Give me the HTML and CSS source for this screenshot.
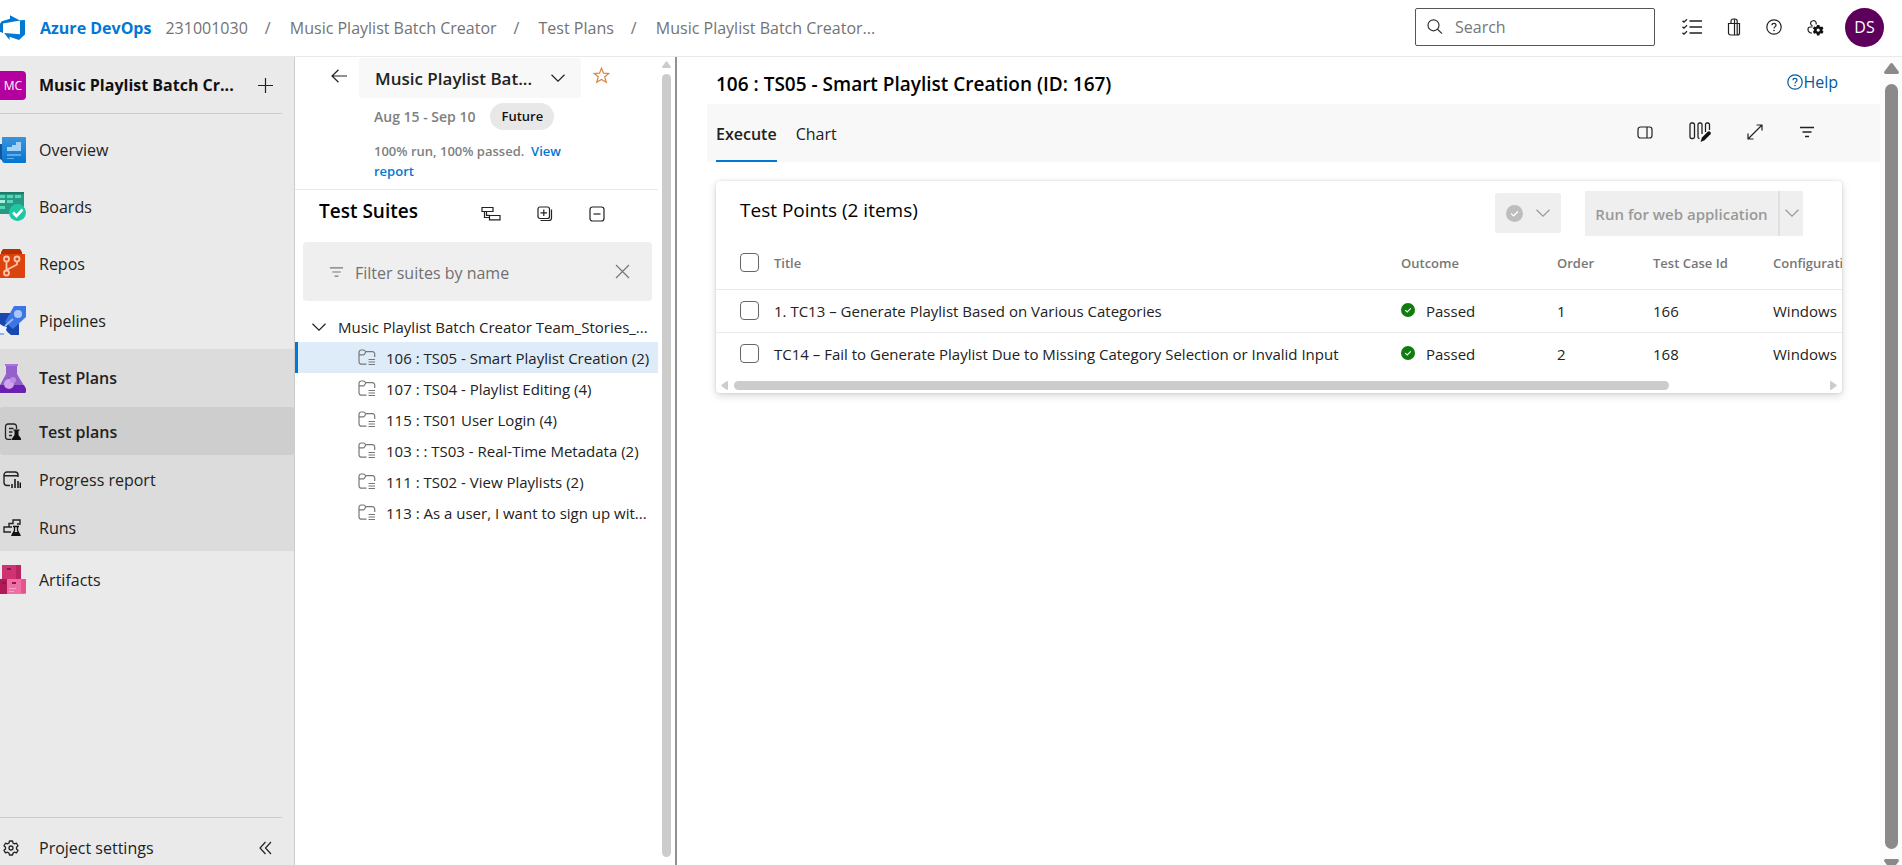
FILE: index.html
```html
<!DOCTYPE html>
<html lang="en">
<head>
<meta charset="utf-8">
<title>Test Plans - Azure DevOps</title>
<link rel="stylesheet" href="styles.css">
</head>
<body>
<svg class="defs" aria-hidden="true">
  <symbol id="chevron" viewBox="0 0 14 8"><path d="M.5.8 7 7.2 13.5.8" fill="none" stroke="currentColor" stroke-width="1.2"/></symbol>
  <symbol id="filter" viewBox="0 0 16 12"><path d="M1 1.500h14M3.500 6h9M6 10.500h4" fill="none" stroke="currentColor" stroke-width="1.300"/></symbol>
  <symbol id="help" viewBox="0 0 16 16"><circle cx="8" cy="8" r="7.200" fill="none" stroke="currentColor" stroke-width="1.200"/><path d="M6 6.300C6 5 6.900 4.300 8 4.300s2 .8 2 1.900C10 7.600 8 7.700 8 9.500" fill="none" stroke="currentColor" stroke-width="1.200"/><circle cx="8" cy="11.500" r=".8" fill="currentColor"/></symbol>
  <symbol id="suite" viewBox="0 0 18 17"><path d="M8.500 15.200H3.500a2.500 2.500 0 0 1-2.500-2.500V3.200A2.200 2.200 0 0 1 3.200 1h2.300c1.200 0 1.600 1.700 3 1.700h6A2.200 2.200 0 0 1 16.700 5v3M1 5.800h4.500c1.400 0 1.600-3.100 3-3.100M10.500 10.500H17M10.500 13H17M10.500 15.500H17" fill="none" stroke="currentColor" stroke-width="1.200"/></symbol>
  <symbol id="passed" viewBox="0 0 14 14"><circle cx="7" cy="7" r="7" fill="currentColor"/><path d="M4.200 7.100 6.200 9 9.800 5.300" fill="none" stroke="#fff" stroke-width="1.100"/></symbol>
</svg>

<header class="topbar">
  <svg class="logo" viewBox="0 0 25 25"><path fill="#0078d4" d="M25 5v14.500L19 25l-9.500-3.300V25l-5.300-7L20 19.300V5.300zM20 5.500 10 .2v3.600L1.800 6.300 0 8.700v8l3 1.400V8.400z"/></svg>
  <a class="brand" href="#">Azure DevOps</a>
  <nav class="crumbs" aria-label="Breadcrumb">
    <a href="#">231001030</a><span>/</span><a href="#">Music Playlist Batch Creator</a><span>/</span><a href="#">Test Plans</a><span>/</span><a href="#">Music Playlist Batch Creator...</a>
  </nav>
  <label class="search">
    <svg width="16" height="16" viewBox="0 0 16 16"><path d="M10.800 10.500 15 14.700M12 6.300a5.500 5.500 0 1 1-11 0 5.500 5.500 0 0 1 11 0z" fill="none" stroke="#333" stroke-width="1.200"/></svg>
    <input type="search" placeholder="Search" aria-label="Search">
  </label>
  <div class="top-actions">
    <button aria-label="Work items"><svg width="20" height="18" viewBox="0 0 20 18"><path d="M7.500 3H20M7.500 9H20M7.500 15H20M.5 2.700 2 4.200 5 1.200M.5 8.700 2 10.200 5 7.200M.5 14.700 2 16.200 5 13.200" fill="none" stroke="#222" stroke-width="1.300"/></svg></button>
    <button aria-label="Marketplace"><svg width="14" height="18" viewBox="0 0 14 18"><path d="M1.500 5.500h11v9.500a2 2 0 0 1-2 2h-7a2 2 0 0 1-2-2zM4 5.500V3.200C4 1.900 4.800 1 6 1h2.200c1.200 0 2 .9 2 2.200V17M7.500 1v16" fill="none" stroke="#222" stroke-width="1.200"/></svg></button>
    <button aria-label="Help"><svg width="16" height="16"><use href="#help"/></svg></button>
    <button aria-label="User settings"><svg width="17" height="17" viewBox="0 0 17 17"><path d="M9 5.500A3 3 0 0 0 9 3.200 3 3 0 0 0 3.500 4c0 1.400.8 2.400 2 2.900M5.500 8H3.200A2.200 2.200 0 0 0 1 10.200c0 2 1.400 3.600 3.800 4" fill="none" stroke="#222" stroke-width="1.200"/><path fill="#111" fill-rule="evenodd" d="M10 6h2.400l.4 1.500 1 .5 1.500-.5 1.200 2-1.100 1.100v1l1.100 1.100-1.200 2-1.500-.4-1 .5-.4 1.600H10l-.4-1.600-1-.5-1.500.4-1.200-2L7 11.600v-1L5.900 9.500l1.200-2 1.500.5 1-.5zM11.200 9.500a1.600 1.600 0 1 0 0 3.200 1.600 1.600 0 0 0 0-3.200z"/></svg></button>
    <button class="avatar" aria-label="Account">DS</button>
  </div>
</header>

<div class="shell">
  <aside class="sidebar">
    <div class="project">
      <span class="project-badge">MC</span>
      <strong>Music Playlist Batch Cr...</strong>
      <button aria-label="Add"><svg width="15" height="15" viewBox="0 0 15 15"><path d="M7.500 0v15M0 7.500h15" stroke="#222" stroke-width="1.200"/></svg></button>
    </div>
    <nav class="menu">
      <a href="#"><svg class="hub" viewBox="0 0 26 29"><path fill="#135796" d="M0 9h8v17H3L0 24z"/><path fill="url(#gb)" d="M2 2h23a1 1 0 0 1 1 1v24a1 1 0 0 1-1 1H5a3 3 0 0 1-3-3z"/><defs><linearGradient id="gb" x2="0" y2="1"><stop stop-color="#3b93dc"/><stop offset="1" stop-color="#0574d2"/></linearGradient></defs><path fill="#a8d2f5" d="M7 12h5v-2h4V7h5v9H7z"/><path fill="#5fabea" d="M7 19h14v2H7zM7 23h7v1H7z"/></svg>Overview</a>
      <a href="#"><svg class="hub" viewBox="0 0 26 29"><path fill="#289a83" d="M0 0h24v22H0z"/><path fill="#1b7c69" d="M0 0h24v2H0z"/><path fill="#57d6b9" d="M0 3h5v3H0zM7 3h6v3H7zM15 3h6v3h-6zM7 8h6v3H7zM0 14h5v3H0z"/><path fill="#a8f2de" d="M0 8h5v3H0z"/><circle cx="17.500" cy="20.500" r="8.500" fill="#1fc6a6"/><path d="m13 20.500 3.500 3.500 6-6.500" stroke="#fff" stroke-width="2.600" fill="none"/></svg>Boards</a>
      <a href="#"><svg class="hub" viewBox="0 0 26 29"><path fill="#b92f00" d="M3 0h17l2 3v4H1V3z"/><path fill="#db430f" d="M0 5h25v23a1 1 0 0 1-1 1H0z"/><g fill="none" stroke="#ffc5ab" stroke-width="1.800"><circle cx="6.500" cy="10" r="2.500"/><circle cx="17" cy="10" r="2.500"/><circle cx="6.500" cy="24" r="2.500"/><path d="M6.500 12.500v9M17 12.500v3L6.500 21"/></g></svg>Repos</a>
      <a href="#"><svg class="hub" viewBox="0 0 26 29"><path fill="#1748ad" d="M0 7h12l7 5v17h-8L0 20z"/><path fill="#3d76e4" d="M14 0h12v11L13 23l-8-7z"/><circle cx="18" cy="8" r="4" fill="#a9c5fa"/><path d="m5 20 8-7" stroke="#9ab9f5" stroke-width="1.800"/><path fill="#eef4ff" d="m0 18 3 2 4 1-1 3 2 3-4-1-1 3-3-2z"/><path fill="#91b0ea" d="M0 27h4v2H0z"/></svg>Pipelines</a>
      <a href="#" class="current"><svg class="hub" viewBox="0 0 26 29"><path fill="#9461cb" d="M6 2h11v8l9 15c1 2 0 4-2 4H0v-8l6-11z"/><path fill="#a774da" d="M5 0h13v2H5z"/><path fill="#6a20b0" d="M0 21h24l2 4c1 2 0 4-2 4H0z"/><circle cx="9" cy="20" r="5" fill="#cfa4ed"/><circle cx="13" cy="16" r="3" fill="#bd8be3"/></svg>Test Plans</a>
      <div class="submenu">
        <a href="#" class="active"><svg width="18" height="18" viewBox="0 0 18 18"><path d="M8.500 16.400H5A2.500 2.500 0 0 1 2.500 14V3.500A2.500 2.500 0 0 1 5 1h6a2.500 2.500 0 0 1 2.500 2.500V6M6 5.500h4.500M6 9h3.500M6 12.500h3" fill="none" stroke="#222" stroke-width="1.300"/><path fill="#111" d="M10.500 6.500h6v1.300h-1V12l2.500 3.500V17H9v-1.500l2.500-3.500V7.800h-1z"/></svg>Test plans</a>
        <a href="#"><svg width="18" height="18" viewBox="0 0 18 18"><path d="M7 14.500H4A3 3 0 0 1 1 11.500V4a3 3 0 0 1 3-3h8a3 3 0 0 1 3 3v2M1 4.800h14" fill="none" stroke="#222" stroke-width="1.400"/><path d="M9 13v4M12 8v9M15 10v7M17.300 11.500V17" stroke="#111" stroke-width="1.500"/></svg>Progress report</a>
        <a href="#"><svg width="18" height="18" viewBox="0 0 18 18"><path d="M8 13H1V8h5V4.500h4V1h7v4h-3M6 8h3" fill="none" stroke="#222" stroke-width="1.400"/><path d="M10 7.500h6M11.500 8v3.500L9 16.200h8l-2.500-4.700V8" fill="none" stroke="#111" stroke-width="1.300"/><path fill="#111" d="M10.500 13h5l2 4h-9z"/></svg>Runs</a>
      </div>
      <a href="#"><svg class="hub" viewBox="0 0 26 29"><path fill="#cf3472" d="M2 0h19v15H2z"/><path fill="#b62560" d="M16 0h5v15h-5z"/><path fill="#b01a58" d="M0 14h8v15H0z"/><path fill="#ee6fa4" d="M7 14h19v14a1 1 0 0 1-1 1H7z"/><path fill="#e4558f" d="M21 14h5v14h-5z"/><path fill="#98134a" d="M7 3h4v2H7zM2 17h4v2H2zM12 17h4v2h-4z"/><path fill="#f8a6c6" d="M9 23h7v1H9zM9 26h5v1H9z"/></svg>Artifacts</a>
    </nav>
    <div class="settings">
      <a href="#"><svg width="16" height="16" viewBox="0 0 16 16"><path d="M6.500 1h3l.5 2 1.500.9 2-.7 1.500 2.600L13.500 7.200v1.700L15 10.300l-1.500 2.500-2-.6-1.500.9-.5 1.900h-3L6 13.100l-1.500-.9-2 .6L1 10.300l1.500-1.400V7.200L1 5.800l1.500-2.600 2 .7L6 3z" fill="none" stroke="#222" stroke-width="1.300" stroke-linejoin="round"/><circle cx="8" cy="8" r="2" fill="none" stroke="#222" stroke-width="1.300"/></svg>Project settings</a>
      <button aria-label="Collapse navigation"><svg width="13" height="14" viewBox="0 0 13 14"><path d="M6.500 1 1 7l5.500 6M12 1 6.500 7l5.500 6" fill="none" stroke="#222" stroke-width="1.200"/></svg></button>
    </div>
  </aside>

  <section class="plan">
    <div class="plan-content">
      <div class="plan-head">
        <button class="back" aria-label="Back"><svg width="16" height="14" viewBox="0 0 16 14"><path d="M16 7H1M7.500.8 1 7l6.500 6.200" fill="none" stroke="#222" stroke-width="1.200"/></svg></button>
        <div class="plan-info">
          <div class="plan-title">
            <button class="picker">Music Playlist Bat...<svg width="14" height="8"><use href="#chevron"/></svg></button>
            <button class="star" aria-label="Favorite"><svg width="17" height="17" viewBox="0 0 17 17"><path d="m8.500 1.200 2 5 5.300.3-4.100 3.300 1.600 5.500-4.800-2.900-4.800 2.900 1.600-5.500-4.100-3.300 5.300-.3z" fill="none" stroke="#d9843b" stroke-width="1.200"/></svg></button>
          </div>
          <div class="dates">Aug 15 - Sep 10<span class="pill">Future</span></div>
          <p class="summary">100% run, 100% passed.&nbsp; <a href="#">View report</a></p>
        </div>
      </div>
      <div class="suites-head">
        <h2>Test Suites</h2>
        <button aria-label="Suite layout"><svg width="20" height="16" viewBox="0 0 20 16"><path d="M1 1.500h11v4H1zM8.500 9.500H19v4.300H8.500zM3.500 5.500v6h5M5.500 5.500v3.800h3" fill="none" stroke="#222" stroke-width="1.200"/></svg></button>
        <button aria-label="Expand all"><svg width="16" height="16" viewBox="0 0 16 16"><rect x="1" y="1" width="11.500" height="11.500" rx="2" fill="none" stroke="#222" stroke-width="1.200"/><path d="M6.800 3.500v6.500M3.500 6.800H10M14.500 3.500V12a2.500 2.500 0 0 1-2.500 2.500H3.500" fill="none" stroke="#222" stroke-width="1.200"/></svg></button>
        <button aria-label="Collapse all"><svg width="16" height="16" viewBox="0 0 16 16"><rect x="1" y="1" width="14" height="14" rx="2.500" fill="none" stroke="#222" stroke-width="1.200"/><path d="M4.500 8h7" stroke="#222" stroke-width="1.200"/></svg></button>
      </div>
      <div class="filter">
        <svg width="15" height="12"><use href="#filter"/></svg>
        <input type="text" placeholder="Filter suites by name" aria-label="Filter suites by name">
        <button aria-label="Clear filter"><svg width="15" height="15" viewBox="0 0 15 15"><path d="m1 1 13 13M14 1 1 14" stroke="currentColor" stroke-width="1.200"/></svg></button>
      </div>
      <div class="tree">
        <button class="root"><svg width="14" height="8"><use href="#chevron"/></svg><span>Music Playlist Batch Creator Team_Stories_...</span></button>
        <ul>
          <li class="selected"><a href="#"><svg width="18" height="17"><use href="#suite"/></svg>106 : TS05 - Smart Playlist Creation (2)</a></li>
          <li><a href="#"><svg width="18" height="17"><use href="#suite"/></svg>107 : TS04 - Playlist Editing (4)</a></li>
          <li><a href="#"><svg width="18" height="17"><use href="#suite"/></svg>115 : TS01 User Login (4)</a></li>
          <li><a href="#"><svg width="18" height="17"><use href="#suite"/></svg>103 : : TS03 - Real-Time Metadata (2)</a></li>
          <li><a href="#"><svg width="18" height="17"><use href="#suite"/></svg>111 : TS02 - View Playlists (2)</a></li>
          <li><a href="#"><svg width="18" height="17"><use href="#suite"/></svg>113 : As a user, I want to sign up wit...</a></li>
        </ul>
      </div>
    </div>
    <div class="scroll-y" aria-hidden="true"><svg width="9" height="7" viewBox="0 0 9 7"><path d="M3.500 1q1-1.500 2 0L9 6q0 1-1 1H1Q0 7 0 6z" fill="currentColor"/></svg><i></i></div>
  </section>

  <main class="work">
    <div class="work-content">
      <div class="work-head">
        <h1>106 : TS05 - Smart Playlist Creation (ID: 167)</h1>
        <a class="help" href="#"><svg width="16" height="16"><use href="#help"/></svg>Help</a>
      </div>
      <div class="tabs">
        <button class="on">Execute</button>
        <button>Chart</button>
        <div class="tools">
          <button aria-label="Details pane"><svg width="16" height="13" viewBox="0 0 16 13"><rect x="1" y="1" width="14" height="11" rx="2.500" fill="none" stroke="#222" stroke-width="1.200"/><path d="M10 1v11" stroke="#222" stroke-width="1.200"/></svg></button>
          <button aria-label="Column options"><svg width="22" height="20" viewBox="0 0 22 20"><g fill="none" stroke="#222" stroke-width="1.300"><rect x="1" y="1" width="4.500" height="15.500" rx="1.500"/><path d="M13 12V2.500A1.500 1.500 0 0 0 11.500 1h-1A1.500 1.500 0 0 0 9 2.500V15a1.500 1.500 0 0 0 1.500 1.500M20.500 8V2.500A1.500 1.500 0 0 0 19 1h-1a1.500 1.500 0 0 0-1.500 1.500V10"/></g><path fill="#111" d="M11.500 20 13 15.500l6-6q1-.8 2.200.2 1.200 1.300.3 2.500l-6 6z"/></svg></button>
          <button aria-label="Full screen"><svg width="16" height="16" viewBox="0 0 16 16"><path d="M1 15 15 1M9.500 1H15v5.500M1 9.500V15h5.500" fill="none" stroke="#222" stroke-width="1.200"/></svg></button>
          <button aria-label="Filter"><svg width="16" height="12"><use href="#filter"/></svg></button>
        </div>
      </div>
      <section class="card">
        <div class="card-head">
          <h2>Test Points (2 items)</h2>
          <button class="outcome-btn" aria-label="Set outcome" disabled><svg width="17" height="17"><use href="#passed"/></svg><svg width="14" height="8"><use href="#chevron"/></svg></button>
          <div class="split"><button disabled>Run for web application</button><button aria-label="More run options" disabled><svg width="14" height="8"><use href="#chevron"/></svg></button></div>
        </div>
        <div class="table-wrap">
          <table>
            <colgroup><col class="c-check"><col><col class="c-outcome"><col class="c-order"><col class="c-id"><col class="c-config"></colgroup>
            <thead><tr><th><input type="checkbox" aria-label="Select all"></th><th>Title</th><th>Outcome</th><th>Order</th><th>Test Case Id</th><th>Configuration</th></tr></thead>
            <tbody>
              <tr><td><input type="checkbox" aria-label="Select test case 166"></td><td>1. TC13 – Generate Playlist Based on Various Categories</td><td><span class="status"><svg width="14" height="14"><use href="#passed"/></svg>Passed</span></td><td>1</td><td>166</td><td>Windows 10</td></tr>
              <tr><td><input type="checkbox" aria-label="Select test case 168"></td><td>TC14 – Fail to Generate Playlist Due to Missing Category Selection or Invalid Input</td><td><span class="status"><svg width="14" height="14"><use href="#passed"/></svg>Passed</span></td><td>2</td><td>168</td><td>Windows 10</td></tr>
            </tbody>
          </table>
        </div>
        <div class="scroll-x" aria-hidden="true"><svg width="7" height="9" viewBox="0 0 7 9"><path d="M1 3.500q-1.500 1 0 2L6 9q1 0 1-1V1q0-1-1-1z" fill="currentColor"/></svg><i></i><b></b><svg width="7" height="9" viewBox="0 0 7 9"><path d="M6 3.500q1.500 1 0 2L1 9Q0 9 0 8V1q0-1 1-1z" fill="currentColor"/></svg></div>
      </section>
    </div>
    <div class="scroll-main" aria-hidden="true"><svg width="15" height="11" viewBox="0 0 15 11"><path d="M6 1q1.500-2 3 0l6 8q0 2-1.500 2h-12Q0 11 0 9z" fill="currentColor"/></svg><i></i><svg width="15" height="6" viewBox="0 0 15 6"><path d="M1.500 0h12Q15 0 15 2l-3 4H3L0 2Q0 0 1.500 0z" fill="currentColor"/></svg></div>
  </main>
</div>
</body>
</html>
```
FILE: styles.css
```css
* { box-sizing: border-box; }
body {
  margin: 0;
  height: 100vh;
  display: flex;
  flex-direction: column;
  overflow: hidden;
  font-family: "Open Sans", "Noto Sans", sans-serif;
  font-size: 15px;
  color: #222;
  background: #fff;
}
a { color: inherit; text-decoration: none; }
button { margin: 0; padding: 0; border: 0; background: none; font: inherit; color: inherit; display: flex; align-items: center; justify-content: center; }
input { font: inherit; margin: 0; }
h1, h2, p, ul { margin: 0; padding: 0; }
li { list-style: none; }
svg { display: block; flex: none; }
.defs { position: absolute; width: 0; height: 0; }

/* Top bar */
.topbar { display: flex; align-items: center; flex: none; height: 57px; padding: 0 18px 2px 0; border-bottom: 1px solid #eaeaea; font-size: 16px; }
.logo { width: 25px; height: 25px; }
.brand { margin-left: 15px; padding-top: 2px; font-weight: 700; color: #0078d4; }
.crumbs { display: flex; flex: 1; margin-left: 14px; padding-top: 2px; color: #737373; white-space: nowrap; }
.crumbs span { width: 8px; margin: 0 17px; }
.search { display: flex; align-items: center; gap: 10px; width: 240px; height: 38px; padding: 0 11px; border: 1px solid #555; border-radius: 2px; }
.search input { width: 100%; border: 0; outline: 0; background: none; }
.search input::placeholder { color: #767676; opacity: 1; }
.top-actions { display: flex; align-items: center; gap: 25px; margin-left: 27px; }
.top-actions .avatar { width: 39px; height: 39px; margin-left: -4px; border-radius: 50%; background: #5c005c; color: #fff; }

.shell { display: flex; flex: 1; min-height: 0; }

/* Navigation */
.sidebar { display: flex; flex-direction: column; flex: none; width: 295px; background: #eaeaea; border-right: 1px solid #ccc; font-size: 16px; }
.project { display: flex; align-items: center; height: 57px; margin-right: 12px; padding-right: 9px; border-bottom: 1px solid #ccc; }
.project strong { flex: 1; margin-left: 13px; white-space: nowrap; color: #111; }
.project-badge { width: 26px; height: 29px; border-radius: 0 4px 4px 0; background: #b4009e; color: #fff; font-size: 12px; line-height: 29px; text-align: center; }
.menu { flex: 1; padding-top: 7px; }
.menu a { display: flex; align-items: center; gap: 13px; height: 57px; }
.hub { width: 26px; height: 29px; }
.menu .current { height: 58px; background: #dcdcdc; font-weight: 600; }
.submenu { background: #dcdcdc; }
.submenu a { height: 48px; gap: 18px; padding: 1px 0 0 3px; }
.submenu .active { background: #cecece; border-radius: 3px; font-weight: 600; }
.settings { display: flex; align-items: center; justify-content: space-between; height: 48px; margin-right: 12px; padding: 12px 10px 0 3px; border-top: 1px solid #ccc; }
.settings a { display: flex; align-items: center; gap: 20px; }

/* Plan pane */
.plan { display: flex; flex: none; width: 382px; border-right: 2px solid #919191; }
.plan-content { flex: 1; min-width: 0; }
.plan-head { display: flex; height: 133px; padding-left: 36px; border-bottom: 1px solid #eaeaea; }
.back { width: 16px; height: 38px; }
.plan-info { flex: 1; margin-left: 12px; font-size: 13px; font-weight: 600; color: #808080; }
.plan-title { display: flex; gap: 12px; }
.picker { justify-content: space-between; width: 222px; height: 40px; margin-top: 1px; padding: 0 16px; border-radius: 2px; background: #f8f8f8; color: #222; font-size: 17px; font-weight: 600; }
.star { height: 36px; }
.dates { display: flex; align-items: center; gap: 15px; margin: 5px 0 0 15px; font-size: 14px; white-space: nowrap; }
.pill { padding: 0 11px; border-radius: 14px; background: #e8e8e8; color: #111; font-size: 13px; line-height: 27px; }
.summary { width: 210px; margin: 11px 0 0 15px; line-height: 20px; }
.summary a { color: #0078d4; }
.suites-head { display: flex; align-items: center; gap: 36px; height: 52px; padding: 0 53px 10px 24px; }
.suites-head h2 { flex: 1; color: #000; font-size: 19px; font-weight: 600; }
.suites-head button { padding-top: 6px; }
.filter { display: flex; align-items: center; gap: 11px; height: 59px; margin: 0 6px 0 8px; padding: 0 22px 0 26px; border-radius: 4px; background: #efefef; color: #777; font-size: 16px; }
.filter input { flex: 1; min-width: 0; padding: 2px 0 0; border: 0; outline: 0; background: none; }
.filter input::placeholder { color: #707070; opacity: 1; }
.tree { padding-top: 10px; white-space: nowrap; }
.root { gap: 12px; height: 31px; padding-left: 17px; }
.tree a { display: flex; align-items: center; gap: 10px; height: 31px; padding-left: 60px; border-left: 3px solid transparent; }
.tree a svg { color: #777; }
.tree .selected a { border-color: #0078d4; background: #deecf9; }
.scroll-y { display: flex; flex-direction: column; align-items: center; gap: 6px; width: 17px; padding: 4px 2px 8px; color: #ccc; }
.scroll-y i { flex: 1; width: 9px; border-radius: 5px; background: currentColor; }

/* Work area */
.work { display: flex; flex: 1; min-width: 0; }
.work-content { flex: 1; min-width: 0; padding-left: 30px; }
.work-head { display: flex; align-items: center; justify-content: space-between; height: 47px; padding: 7px 42px 0 9px; }
.work-head h1 { color: #000; font-size: 19px; font-weight: 600; }
.help { display: flex; align-items: center; padding-bottom: 4px; color: #005a9e; font-size: 16px; }
.tabs { display: flex; gap: 19px; height: 58px; padding: 0 65px 0 9px; background: #f8f8f8; font-size: 16px; }
.tabs > button { padding-top: 4px; border-bottom: 2px solid transparent; }
.tabs > .on { border-color: #0078d4; font-weight: 600; }
.tools { display: flex; align-items: center; gap: 36px; margin-left: auto; padding-bottom: 2px; }
.card { margin: 19px 38px 0 9px; overflow: hidden; border-radius: 4px; background: #fff; box-shadow: 0 3px 8px rgba(0, 0, 0, .15), 0 0 3px rgba(0, 0, 0, .12); }
.card-head { display: flex; align-items: center; height: 62px; padding: 2px 39px 0 24px; }
.card-head h2 { flex: 1; padding-bottom: 6px; color: #000; font-size: 19px; font-weight: 400; }
.outcome-btn { gap: 13px; width: 66px; height: 40px; margin-right: 24px; border-radius: 2px; background: #efefef; color: #999; }
.outcome-btn svg:first-child { color: #bdbdbd; }
.split { display: flex; gap: 2px; height: 45px; border-radius: 2px; background: #e0e0e0; overflow: hidden; color: #999; font-weight: 600; white-space: nowrap; }
.split button { width: 23px; background: #efefef; }
.split button:first-child { width: 193px; padding-top: 2px; }
.table-wrap { overflow: hidden; }
table { width: calc(100% + 220px); table-layout: fixed; border-collapse: collapse; }
.c-check { width: 58px; }
.c-outcome { width: 156px; }
.c-order { width: 96px; }
.c-id { width: 120px; }
.c-config { width: 289px; }
th, td { padding: 0; text-align: left; white-space: nowrap; border-bottom: 1px solid #eaeaea; }
th { height: 46px; padding-bottom: 6px; color: #777; font-size: 13px; font-weight: 600; }
td { height: 43px; }
th:first-child, td:first-child { padding-left: 24px; }
tbody tr:last-child td { border-bottom: 0; }
input[type="checkbox"] { display: block; appearance: none; width: 19px; height: 19px; border: 1px solid #666; border-radius: 4px; background: #fff; }
.status { display: flex; align-items: center; gap: 11px; }
.status svg { margin-bottom: 2px; color: #107c10; }
.scroll-x { display: flex; align-items: center; gap: 6px; height: 18px; padding: 3px 5px 0; color: #ccc; }
.scroll-x i { flex: 939; height: 9px; border-radius: 5px; background: currentColor; }
.scroll-x b { flex: 150; }
.scroll-main { display: flex; flex-direction: column; align-items: center; gap: 10px; width: 22px; padding: 6px 0 0; background: #fcfcfc; color: #8a8a8a; }
.scroll-main i { flex: 1; width: 13px; border-radius: 7px; background: currentColor; }
```
